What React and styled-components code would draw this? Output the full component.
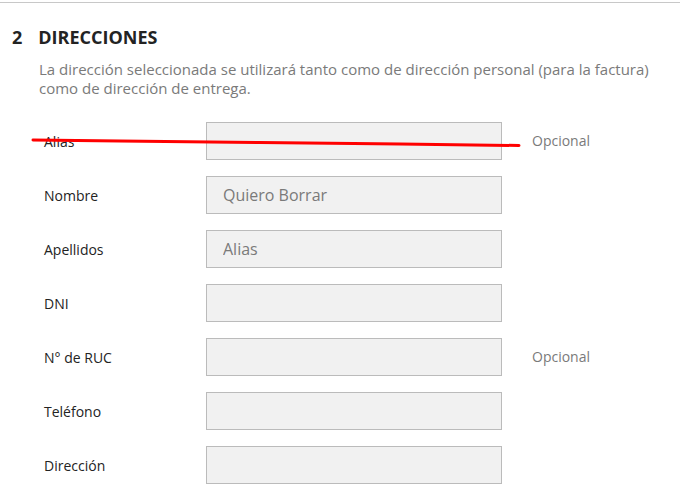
import React from 'react';
import styled, { createGlobalStyle } from 'styled-components';

const GlobalStyle = createGlobalStyle`
  body {
    margin: 0;
    background: #fff;
    font-family: "Open Sans", "Noto Sans", sans-serif;
    color: #232323;
  }
`;

const Page = styled.section`
  position: relative;
  width: 680px;
  height: 488px;
  overflow: hidden;
  border-top: 1px solid #c8c8c8;
  margin-top: 2px;
  box-sizing: border-box;
`;

const StepTitle = styled.h1`
  display: flex;
  gap: 16px;
  margin: 0;
  padding: 22px 0 0 12px;
  font-size: 18px;
  font-weight: 700;
  line-height: 24px;
  text-transform: uppercase;
  color: #232323;
`;

const Intro = styled.p`
  margin: 11px 20px 0 39px;
  font-size: 15px;
  line-height: 19px;
  color: #7a7a7a;
`;

const Fields = styled.div`
  display: flex;
  flex-direction: column;
  gap: 16px;
  padding: 24px 0 0 44px;
`;

const Row = styled.div`
  display: grid;
  grid-template-columns: 162px 296px auto;
  align-items: center;
  height: 38px;
`;

const Label = styled.label`
  font-size: 14px;
  color: #232323;
`;

const Input = styled.input`
  box-sizing: border-box;
  width: 296px;
  height: 38px;
  padding: 0 16px;
  border: 1px solid #bbb;
  background: #f1f1f1;
  font-family: inherit;
  font-size: 16px;
  color: #7a7a7a;
  outline: none;
  &::placeholder { color: #7a7a7a; }
`;

const Hint = styled.span`
  padding-left: 30px;
  font-size: 14px;
  color: #7a7a7a;
  margin-top: -2px;
`;

const Scribble = styled.svg`
  position: absolute;
  left: 0;
  top: -3px;
  pointer-events: none;
`;

const fields = [
  { label: 'Alias', optional: true },
  { label: 'Nombre', placeholder: 'Quiero Borrar' },
  { label: 'Apellidos', placeholder: 'Alias' },
  { label: 'DNI' },
  { label: 'N° de RUC', optional: true },
  { label: 'Teléfono' },
  { label: 'Dirección' },
];

export default function App() {
  return (
    <>
      <GlobalStyle />
      <Page>
        <StepTitle>
          <span>2</span>
          <span>Direcciones</span>
        </StepTitle>
        <Intro>
          La dirección seleccionada se utilizará tanto como de dirección personal (para la factura)
          como de dirección de entrega.
        </Intro>
        <Fields>
          {fields.map(f => (
            <Row key={f.label}>
              <Label>{f.label}</Label>
              <Input placeholder={f.placeholder || ''} readOnly />
              {f.optional ? <Hint>Opcional</Hint> : <span />}
            </Row>
          ))}
        </Fields>
        <Scribble width="680" height="488">
          <path
            d="M33 140 L120 141 L260 142.5 L400 144 L519 145.5"
            stroke="#ff0000"
            strokeWidth="3"
            fill="none"
            strokeLinecap="round"
          />
        </Scribble>
      </Page>
    </>
  );
}
